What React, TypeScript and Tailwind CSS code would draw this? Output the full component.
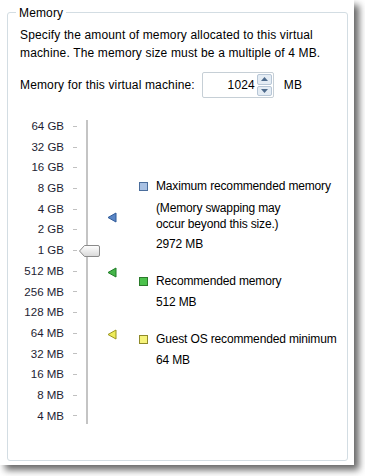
import React from 'react';

const scale = ['64 GB', '32 GB', '16 GB', '8 GB', '4 GB', '2 GB', '1 GB', '512 MB', '256 MB', '128 MB', '64 MB', '32 MB', '16 MB', '8 MB', '4 MB'];

const Marker = ({ top, fill, stroke }: { top: number; fill: string; stroke: string }) => (
  <svg className="absolute left-[107px]" style={{ top }} width="10" height="11" viewBox="0 0 10 11">
    <polygon points="9,1 9,10 1,5.5" fill={fill} stroke={stroke} strokeWidth="1" />
  </svg>
);

const Swatch = ({ color, border }: { color: string; border: string }) => (
  <span className={`inline-block w-[9px] h-[9px] border ${border} ${color} mr-[8px] shrink-0`} />
);

const App = () => {
  return (
    <div className="w-[365px] h-[476px] bg-white relative overflow-hidden tracking-[0.15px]" style={{ fontFamily: '"Liberation Sans", Arial, sans-serif' }}>
      <div className="absolute left-0 top-0 w-[354px] h-[465px] bg-white shadow-[5px_5px_7px_rgba(0,0,0,0.6)]">
        <div className="absolute left-[7px] top-[12px] w-[341px] h-[449px] border border-[#d3dde3] rounded-[3px]" />
        <div className="relative text-[12px] text-black">
          <div className="absolute left-[16px] top-[5px] bg-white px-[3px] leading-[16px]">Memory</div>
          <p className="absolute left-[20px] top-[26px] w-[330px] leading-[18px]">
            Specify the amount of memory allocated to this virtual<br />machine. The memory size must be a multiple of 4 MB.
          </p>
          <div className="absolute left-[20px] top-[72px] flex items-center h-[26px]">
            <span>Memory for this virtual machine:</span>
            <div className="ml-[7px] w-[72px] h-[26px] border border-[#c6cfd6] rounded-[2px] flex items-center bg-white">
              <span className="flex-1 text-right pr-[2px]">1024</span>
              <div className="flex flex-col w-[15px] h-[22px] mr-[1px] gap-[1px]">
                <div className="flex-1 border border-[#b7c6d6] bg-[#e4ecf4] rounded-[2px] flex items-center justify-center">
                  <svg width="7" height="4" viewBox="0 0 7 4"><polygon points="0,4 7,4 3.5,0" fill="#4d6a8c" /></svg>
                </div>
                <div className="flex-1 border border-[#b7c6d6] bg-[#e4ecf4] rounded-[2px] flex items-center justify-center">
                  <svg width="7" height="4" viewBox="0 0 7 4"><polygon points="0,0 7,0 3.5,4" fill="#4d6a8c" /></svg>
                </div>
              </div>
            </div>
            <span className="ml-[10px]">MB</span>
          </div>

          {/* slider */}
          <div className="absolute left-0 top-[116px] w-[350px] h-[320px]">
            <div className="absolute left-[4px] top-0 w-[60px] flex flex-col text-[11.5px] text-[#1d1d33] leading-[20.7px] text-right tracking-normal">
              {scale.map((s) => (
                <div key={s} className="h-[20.7px]">{s}</div>
              ))}
            </div>
            <div className="absolute left-[73px] top-0 flex flex-col">
              {scale.map((s) => (
                <div key={s} className="h-[20.7px] flex items-center">
                  <div className="w-[4px] h-[1px] bg-[#c0c0c0]" />
                </div>
              ))}
            </div>
            <div className="absolute left-[86px] top-[4px] w-[3px] h-[304px] bg-[#c4c4c4] border-r border-white" />
            <svg className="absolute left-[78px] top-[128px]" width="23" height="14" viewBox="0 0 23 14">
              <defs>
                <linearGradient id="th" x1="0" y1="0" x2="0" y2="1">
                  <stop offset="0" stopColor="#ffffff" />
                  <stop offset="1" stopColor="#d8d8d8" />
                </linearGradient>
              </defs>
              <path d="M1.5 7 L6.5 1.5 H20 a1.5 1.5 0 0 1 1.5 1.5 V11 a1.5 1.5 0 0 1 -1.5 1.5 H6.5 Z" fill="url(#th)" stroke="#8a8a8a" />
            </svg>
            <Marker top={96} fill="#5a86c6" stroke="#2f5a99" />
            <Marker top={151} fill="#45b54a" stroke="#1f7d26" />
            <Marker top={213} fill="#eeec5a" stroke="#9b9520" />
          </div>

          {/* legend */}
          <div className="absolute left-[139px] top-[178px] flex flex-col leading-[17px] tracking-[-0.15px]">
            <div className="flex items-center"><Swatch color="bg-[#a9c1e3]" border="border-[#4a6d9c]" />Maximum recommended memory</div>
            <div className="pl-[17px] mt-[5px] leading-[16px]">(Memory swapping may<br />occur beyond this size.)</div>
            <div className="pl-[17px] mt-[4px]">2972 MB</div>
            <div className="flex items-center mt-[20px]"><Swatch color="bg-[#4cc24c]" border="border-[#2b7a2b]" />Recommended memory</div>
            <div className="pl-[17px] mt-[4px]">512 MB</div>
            <div className="flex items-center mt-[20px]"><Swatch color="bg-[#f6f37a]" border="border-[#8f8a2a]" />Guest OS recommended minimum</div>
            <div className="pl-[17px] mt-[4px]">64 MB</div>
          </div>
        </div>
      </div>
    </div>
  );
};

export default App;
